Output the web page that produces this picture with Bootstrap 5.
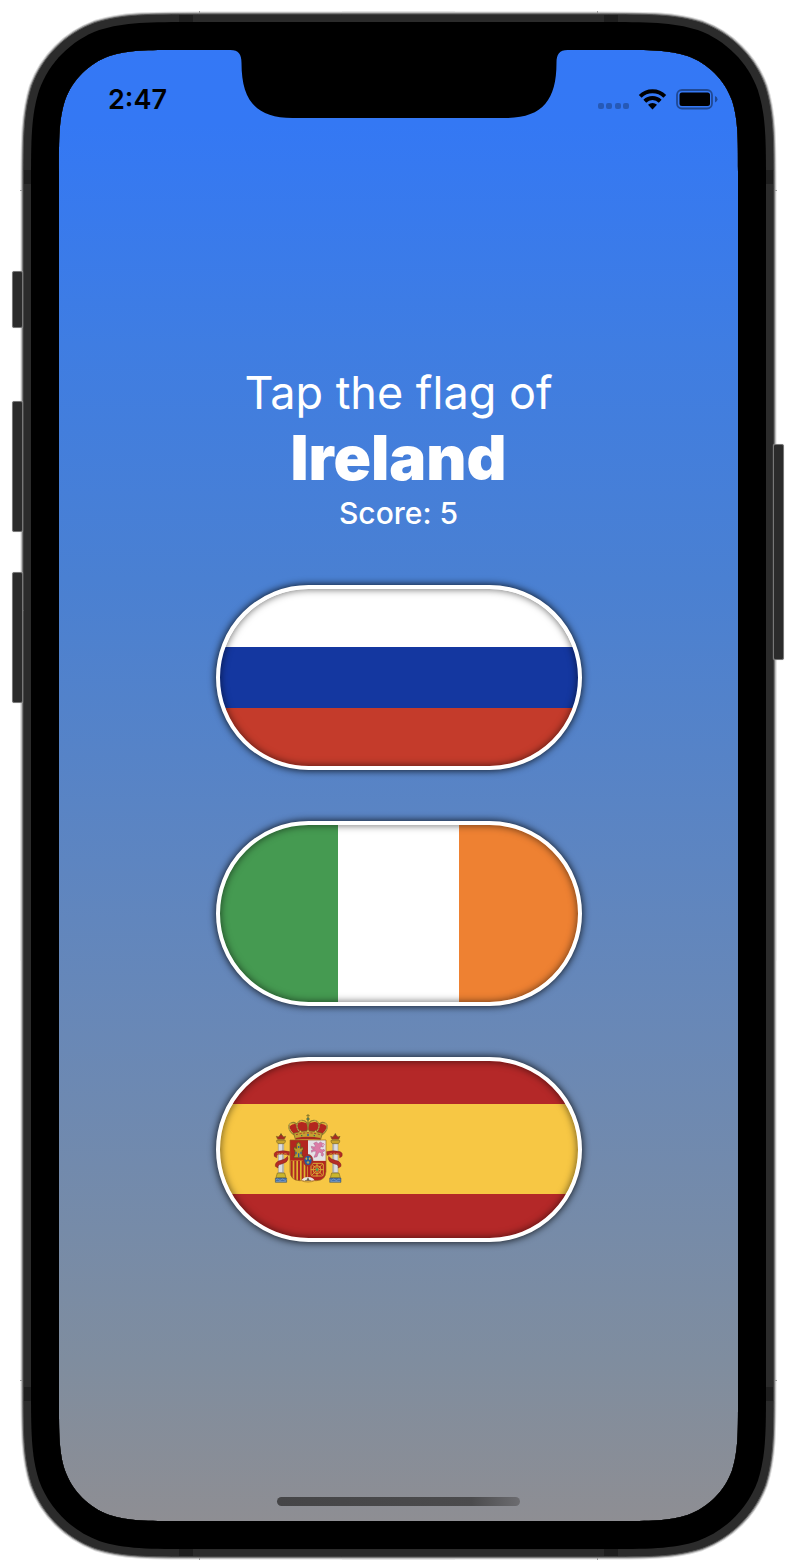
<!DOCTYPE html>
<html lang="en">
<head>
<meta charset="utf-8">
<meta name="viewport" content="width=device-width, initial-scale=1">
<title>Guess the Flag</title>
<link href="https://cdn.jsdelivr.net/npm/bootstrap@5.3.0/dist/css/bootstrap.min.css" rel="stylesheet">
<style>
  body { font-family: Inter, "Liberation Sans", sans-serif; background: #fff; }
  .stage { min-height: 100vh; padding: 11px 19px 3px 20px; }

  /* Phone body: a nine-slice frame around the screen gradient */
  .phone {
    border: 39px solid #000;
    background: linear-gradient(#3478f6, #3478f4 5%, #3f7de2 20%, #4a80d2 36%, #6988b6 67%, #7f8d9f 89%, #8e8e93) padding-box;
    border-image: url("data:image/svg+xml,%3Csvg xmlns='http://www.w3.org/2000/svg' width='400' height='400'%3E%3Cdefs%3E%3CclipPath id='c'%3E%3Cpath d='M0 0H203V39H161.3C126.1 39 108.5 39 89.5 45C68.8 52.5 52.5 68.8 45 89.5C39 108.5 39 126.1 39 161.3V203H0Z'/%3E%3C/clipPath%3E%3Cg id='q' clip-path='url(%23c)'%3E%3Cpath id='b' d='M220 3H177.3C127.1 3 102 3 75 11.5C45.5 22.3 22.3 45.5 11.5 75C3 102 3 127.1 3 177.3V220H220Z' fill='%232b2b2b' stroke='%23dcdcdc' stroke-width='5'/%3E%3Cpath d='M220 3H177.3C127.1 3 102 3 75 11.5C45.5 22.3 22.3 45.5 11.5 75C3 102 3 127.1 3 177.3V220H220Z' fill='%232b2b2b' stroke='%23a0a0a0' stroke-width='3'/%3E%3Cpath d='M220 3H177.3C127.1 3 102 3 75 11.5C45.5 22.3 22.3 45.5 11.5 75C3 102 3 127.1 3 177.3V220H220Z' fill='%232b2b2b' stroke='%23555' stroke-width='1'/%3E%3Cpath d='M159 4H173V12H159ZM4 159V173H12V159Z' fill='%231e1e1e'/%3E%3Cpath d='M179 0h1v2h-1zM0 179v1h2v-1z' fill='%23999'/%3E%3Cpath d='M205 11H176.1C128.6 11 104.8 11 79.2 19.1C51.3 29.3 29.3 51.3 19.1 79.2C11 104.8 11 128.6 11 176.1V205H205Z'/%3E%3C/g%3E%3C/defs%3E%3Cuse href='%23q'/%3E%3Cuse href='%23q' transform='matrix(-1 0 0 1 400 0)'/%3E%3Cuse href='%23q' transform='matrix(1 0 0 -1 0 400)'/%3E%3Cuse href='%23q' transform='matrix(-1 0 0 -1 400 400)'/%3E%3Cpath d='M11 185H39V215H11ZM361 185H389V215H361ZM185 11H215V39H185ZM185 361H215V389H185Z'/%3E%3Cpath d='M4 185H11V215H4ZM389 185H396V215H389ZM185 4H215V11H185ZM185 389H215V396H185Z' fill='%232b2b2b'/%3E%3C/svg%3E") 190 / 190px stretch;
  }
  .side-key {
    position: absolute; width: 11px;
    background: #2b2b2b; border: 1px solid #777; border-radius: 2px;
    box-shadow: 0 0 1px #bbb;
  }
  .key-left { left: -47px; }
  .key-right { right: -46px; }
  .key-mute { top: 221px; height: 57px; }
  .key-up { top: 351px; height: 131px; }
  .key-down { top: 522px; height: 131px; }
  .key-power { top: 394px; height: 216px; }
  .notch { position: absolute; top: 0; left: 50%; transform: translateX(-50%); }

  .status-bar { height: 94px; padding: 34px 20px 0 49px; }
  .clock { font-size: 27px; line-height: 32px; font-weight: 600; color: #000; }
  .safe-bottom { height: 60px; padding-bottom: 15px; }
  .home-bar { width: 243px; height: 9px; border-radius: 5px; background: linear-gradient(90deg, #454547, #4b4b4d 80%, #6c6c70); }

  .prompt { font-size: 45px; line-height: 58px; font-weight: 400; }
  .country { font-size: 62px; line-height: 72px; font-weight: 900; }
  .score { font-size: 30px; line-height: 38px; font-weight: 500; }
  .flags { gap: 51px; margin-top: 53px; }
  .flag {
    width: 366px; height: 185px; padding: 0;
    border: 4px solid #fff; border-radius: 93px;
    background-origin: border-box;
    box-shadow: 0 0 7px 1px rgba(0,0,0,.75), inset 0 0 7px 1px rgba(0,0,0,.5);
  }
  .flag-ru { background-image: linear-gradient(#fff 62px, #1437a0 62px 123px, #c43b2b 123px); }
  .flag-ie { background-image: linear-gradient(90deg, #459a51 122px, #fff 122px 243px, #ee8132 243px); }
  .flag-es { background-image: linear-gradient(#b42828 47px, #f7c744 47px 137px, #b42828 137px); }
  .arms { display: block; margin-left: 53px; }
</style>
</head>
<body>
<div class="stage d-flex">
  <main class="phone position-relative flex-grow-1 d-flex flex-column">
    <span class="side-key key-left key-mute"></span>
    <span class="side-key key-left key-up"></span>
    <span class="side-key key-left key-down"></span>
    <span class="side-key key-right key-power"></span>
    <svg class="notch" width="337" height="68" viewBox="0 0 337 68" aria-hidden="true"><path d="M0 0H337C329 0 326 4 326 13C326 50 312 68 275 68H62C25 68 11 50 11 13C11 4 8 0 0 0Z"/></svg>

    <header class="status-bar d-flex justify-content-between align-items-start">
      <time class="clock">2:47</time>
      <svg width="120" height="32" viewBox="0 0 120 32" aria-hidden="true">
        <g opacity=".25"><rect x="0" y="19" width="6" height="6" rx="2"/><rect x="8" y="19" width="6" height="6" rx="2"/><rect x="17" y="19" width="6" height="6" rx="2"/><rect x="25" y="19" width="6" height="6" rx="2"/></g>
        <g fill="none" stroke="#000" stroke-width="4"><path d="M42.200 12.300a17.500 17.500 0 0 1 24.600 0"/><path d="M46.800 17.200a11 11 0 0 1 15.400 0"/></g>
        <path d="M54.500 25.500L50 20.800A6.500 6.500 0 0 1 59 20.800Z"/>
        <rect x="79" y="6" width="35" height="18.500" rx="5" fill="none" stroke="#000" stroke-opacity=".4" stroke-width="1.800"/>
        <rect x="81.500" y="8.500" width="30.500" height="13.500" rx="2.500"/>
        <path d="M117 12q2.500 .8 2.500 3.300t-2.500 3.300z" opacity=".4"/>
      </svg>
    </header>

    <section class="flex-grow-1 d-flex flex-column align-items-center justify-content-center text-white text-center">
      <div class="prompt">Tap the flag of</div>
      <h1 class="country m-0">Ireland</h1>
      <div class="score">Score: 5</div>
      <div class="flags d-flex flex-column align-items-center">
        <button type="button" class="flag flag-ru" aria-label="White, blue and red horizontal stripes"></button>
        <button type="button" class="flag flag-ie" aria-label="Green, white and orange vertical stripes"></button>
        <button type="button" class="flag flag-es" aria-label="Red, yellow and red horizontal stripes with a coat of arms">
          <svg class="arms" width="70" height="72" viewBox="40 38 210 216" aria-hidden="true">
            <defs>
              <g id="pillar">
                <path d="M56 129h16v88H56z" fill="#dcdce0" stroke="#888" stroke-width="1.500"/>
                <path d="M69 129v88" stroke="#aaa" stroke-width="3"/>
                <path d="M51 120h26v5l-4 5H55l-4-5z" fill="#c9a32a" stroke="#665522" stroke-width="1.500"/>
                <path d="M54 117l-4-9 6 2 8-9 8 9 6-2-4 9z" fill="#a82a22" stroke="#776020" stroke-width="2"/>
                <path d="M64 99v6" stroke="#665522" stroke-width="3"/>
                <path d="M53 218h22l4 14H49z" fill="#c9b52c" stroke="#665522" stroke-width="1.500"/>
                <path d="M47 233h34v13H47z" fill="#3c69a8" stroke="#555f55" stroke-width="1.500"/>
                <path d="M49 238q4-4 8 0t8 0 8 0 7 0M49 243h30" fill="none" stroke="#b5c6d2" stroke-width="1.500"/>
                <path d="M90 154q-19-5-41 0-8 4-5 14l7 4v-8q13-6 38 1z" fill="#b52b25" stroke="#7d251e" stroke-width="1.500"/>
                <path d="M84 168q-6 9-20 12-19 4-17 18l8 5q-2-10 11-12 18-5 19-15z" fill="#b52b25" stroke="#7d251e" stroke-width="1.500"/>
                <path d="M53 159l3 4 3-5 4 5 4-5 5 5 4-4 6 3" fill="none" stroke="#d79a3c" stroke-width="2"/>
              </g>
              <clipPath id="shield"><path d="M91 119h108v95q-2 26-28 27h-52q-26-1-28-27z"/></clipPath>
            </defs>
            <use href="#pillar"/>
            <use href="#pillar" transform="matrix(-1 0 0 1 291 0)"/>
            <g clip-path="url(#shield)">
              <path d="M91 119h54v62H91zM145 181h54v62h-54z" fill="#b3261f"/>
              <path d="M145 119h54v62h-54z" fill="#e4e1e6"/>
              <path d="M91 181h54v62H91z" fill="#dfb42f"/>
              <path d="M96 181v62M107 181v62M118 181v62M129 181v62M140 181v62" stroke="#b02a22" stroke-width="6"/>
              <path d="M124 243q5-13 21-13t21 13z" fill="#e9e5dd"/>
            </g>
            <path d="M103 172h27v-6h-3v-16h3v-9h-5v3h-3v-15h-3v-3h-5v3h-3v15h-3v-3h-5v9h3v16h-3z" fill="#bda02b" stroke="#5d5121" stroke-width="2"/>
            <path d="M107 154h4v8h-4zM115 159h4v12h-4zM122 154h4v8h-4zM115 137h4v6h-4z" fill="#315b9c"/>
            <path d="M162 129l8-4 6 5 6-5 7 4-2 6 4 5-7-1-4 5 7 5 6-2 2 5-7 3 4 7-3 6-5-3 2-5-6-5-5 5-3 9-9 2 2-5 3-6 1-8-8 1-5 3-1-6 9-4-8-2-1-6 8 2 5-2z" fill="#dc7ba6" stroke="#a5628b" stroke-width="1.500"/>
            <path d="M189 139l5-5-3-6" fill="none" stroke="#dc7ba6" stroke-width="3"/>
            <g fill="none" stroke="#d9a634" stroke-width="3"><rect x="154" y="189" width="37" height="38" rx="5"/><circle cx="172" cy="208" r="12"/><path d="M172 188v40M153 208h39M156 191l33 34M189 191l-33 34"/></g>
            <circle cx="172" cy="208" r="4" fill="#4d9b55"/>
            <path d="M145 232l-3 7h6zM136 241l9-2 9 2" fill="#933" stroke="#4b7250" stroke-width="1.500"/>
            <path d="M91 119h108v95q-2 26-28 27h-7q-7 4-19 4t-19-4h-7q-26-1-28-27z" fill="none" stroke="#94651f" stroke-width="2"/>
            <ellipse cx="145" cy="180" rx="15" ry="18" fill="#b52b25" stroke="#71322b"/>
            <ellipse cx="145" cy="180" rx="11" ry="14" fill="#245a9f"/>
            <path d="M140 171v8M137 175h6M150 171v8M147 175h6M145 182v9M141 186h8" stroke="#d7b73b" stroke-width="2.500"/>
            <path d="M105 104q-13-14-17-25 8-9 20-9 15-8 29-3h17q15-5 29 3 12 0 20 9-4 11-17 25z" fill="#b3261f"/>
            <g fill="none" stroke="#93822f" stroke-width="4"><path d="M105 104C87 93 82 75 94 68q13-5 19 8M185 104c18-11 23-29 11-36q-13-5-19 8M118 92c-12-15-5-31 9-32 12 0 18 10 18 24M172 92c12-15 5-31-9-32-12 0-18 10-18 24M145 58v38"/></g>
            <g fill="none" stroke="#e7d793" stroke-width="2" stroke-dasharray="2 3"><path d="M105 102C87 91 82 75 94 68M185 102c18-11 23-27 11-34M118 92c-12-15-5-31 9-32M172 92c12-15 5-31-9-32"/></g>
            <path d="M102 99q43-16 86 0l-5 18q-38-9-76 0z" fill="#c3a132" stroke="#6c5c25" stroke-width="2"/>
            <path d="M109 103q36-11 72 0" fill="none" stroke="#ae3930" stroke-width="3" stroke-dasharray="6 5"/>
            <path d="M108 113q37-8 74 0v4h-74z" fill="#a82920"/>
            <path d="M145 41v16M140 46h10" stroke="#897929" stroke-width="3"/>
            <circle cx="145" cy="56" r="4" fill="#3b796c" stroke="#897929" stroke-width="2"/>
            <path d="M117 96l5-7 5 6M140 94l5-8 5 8M163 95l5-6 5 7" fill="#e0c34c" stroke="#6c5c25" stroke-width="1.500"/>
            <path d="M124 106h4M162 106h4" stroke="#3a7b4c" stroke-width="4"/>
            <circle cx="145" cy="104" r="3" fill="#2f66a0"/>
          </svg>
        </button>
      </div>
    </section>

    <footer class="safe-bottom d-flex justify-content-center align-items-end"><div class="home-bar"></div></footer>
  </main>
</div>
<script src="https://cdn.jsdelivr.net/npm/bootstrap@5.3.0/dist/js/bootstrap.bundle.min.js"></script>
</body>
</html>
